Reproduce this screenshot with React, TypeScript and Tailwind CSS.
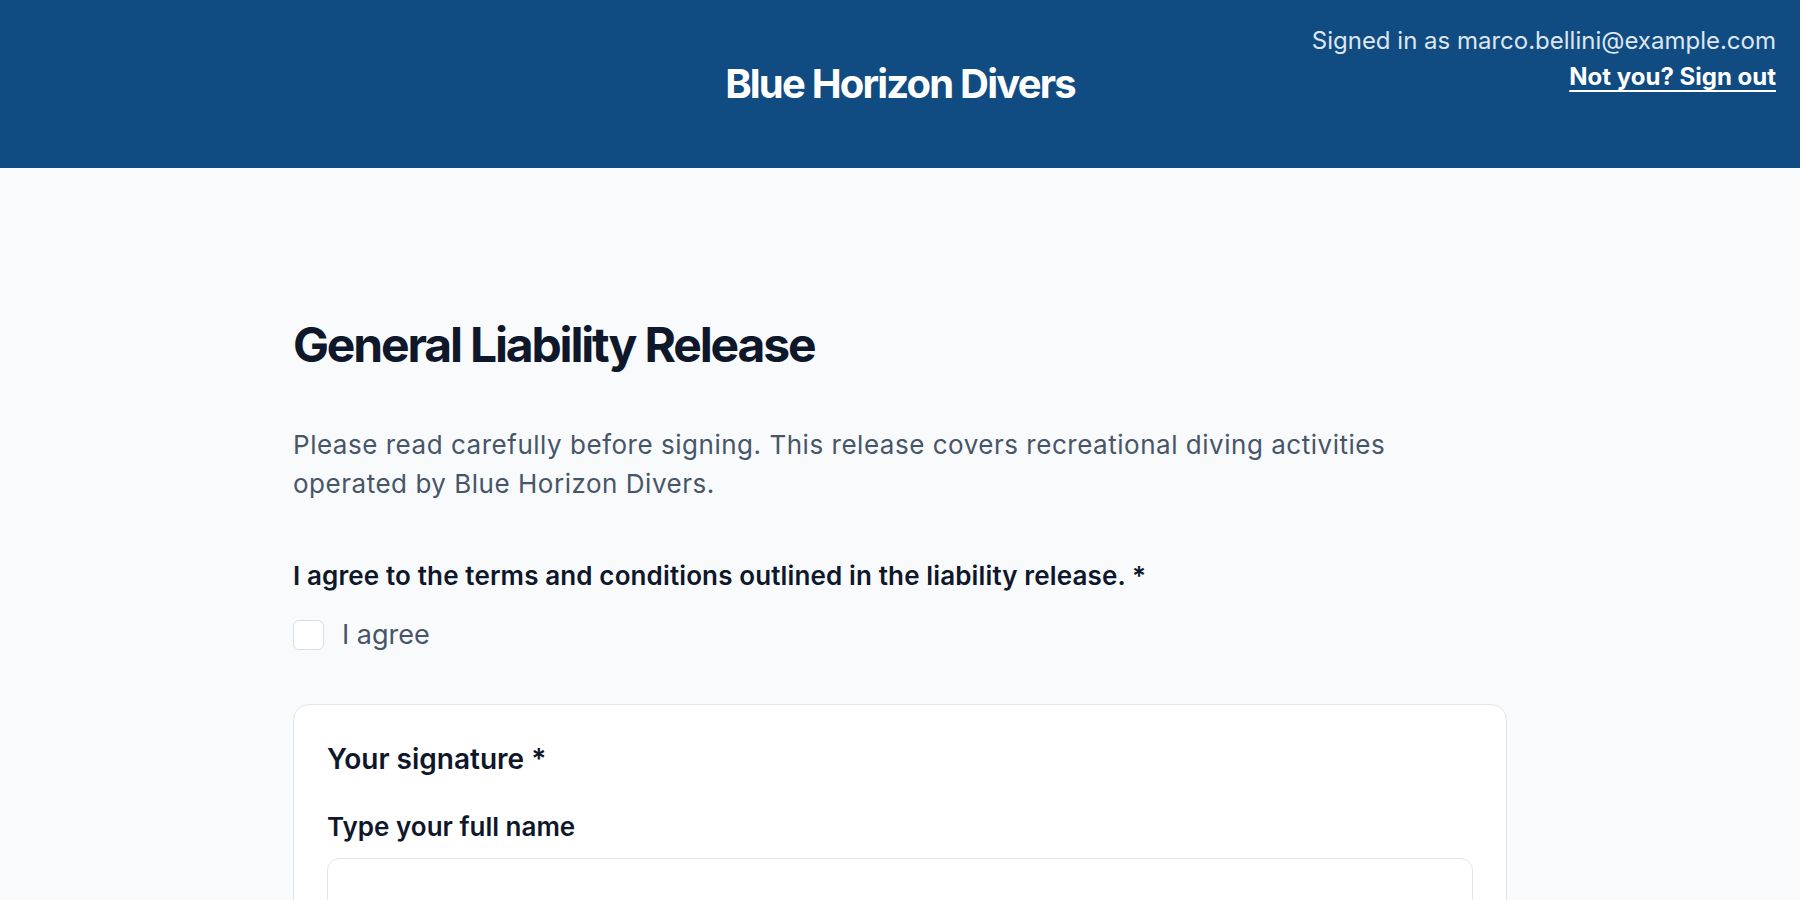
import React from "react";

export default function App() {
  return (
    <div className="min-h-screen bg-[#f8fafc] font-['Inter',_'Noto_Sans',_sans-serif]">
      <header className="grid h-[168px] grid-cols-[1fr_auto_1fr] bg-[#104c82] px-6">
        <div />
        <h1 className="self-center text-[40px] font-bold leading-[48px] tracking-[-0.045em] text-white">
          Blue Horizon Divers
        </h1>
        <div className="flex flex-col items-end self-start pt-[23px] text-[24px] leading-[36px]">
          <span className="text-[#dde6f0]">Signed in as marco.bellini@example.com</span>
          <a
            href="#"
            className="font-bold text-white underline decoration-2 underline-offset-[5px]"
          >
            Not you? Sign out
          </a>
        </div>
      </header>

      <main className="mx-auto max-w-[1214px] pt-[150px]">
        <h2 className="text-[48px] font-bold leading-[53px] tracking-[-0.045em] text-[#0f172a]">
          General Liability Release
        </h2>
        <p className="mt-[54px] max-w-[1150px] text-[26px] leading-[39px] tracking-[0.02em] text-[#475569]">
          Please read carefully before signing. This release covers recreational diving activities
          operated by Blue Horizon Divers.
        </p>

        <div className="mt-[57px]">
          <p className="text-[26px] font-semibold leading-[32px] tracking-[0.005em] text-[#0f172a]">
            I agree to the terms and conditions outlined in the liability release. *
          </p>
          <label className="mt-[28px] flex items-center gap-[18px]">
            <span className="h-[30px] w-[31px] rounded-[6px] border border-[#d9dee5] bg-white" />
            <span className="text-[27px] leading-[30px] text-[#475569]">I agree</span>
          </label>
        </div>

        <section className="mt-[54px] rounded-[16px] border border-[#e2e6eb] bg-white px-[33px] pb-[33px] pt-[35px]">
          <h3 className="text-[28px] font-semibold leading-[39px] text-[#0f172a]">
            Your signature *
          </h3>
          <p className="mt-[32px] text-[26px] font-semibold leading-[32px] text-[#0f172a]">
            Type your full name
          </p>
          <div className="mt-[15px] h-[80px] w-full rounded-[12px] border border-[#e2e6eb] bg-white" />
        </section>
      </main>
    </div>
  );
}
